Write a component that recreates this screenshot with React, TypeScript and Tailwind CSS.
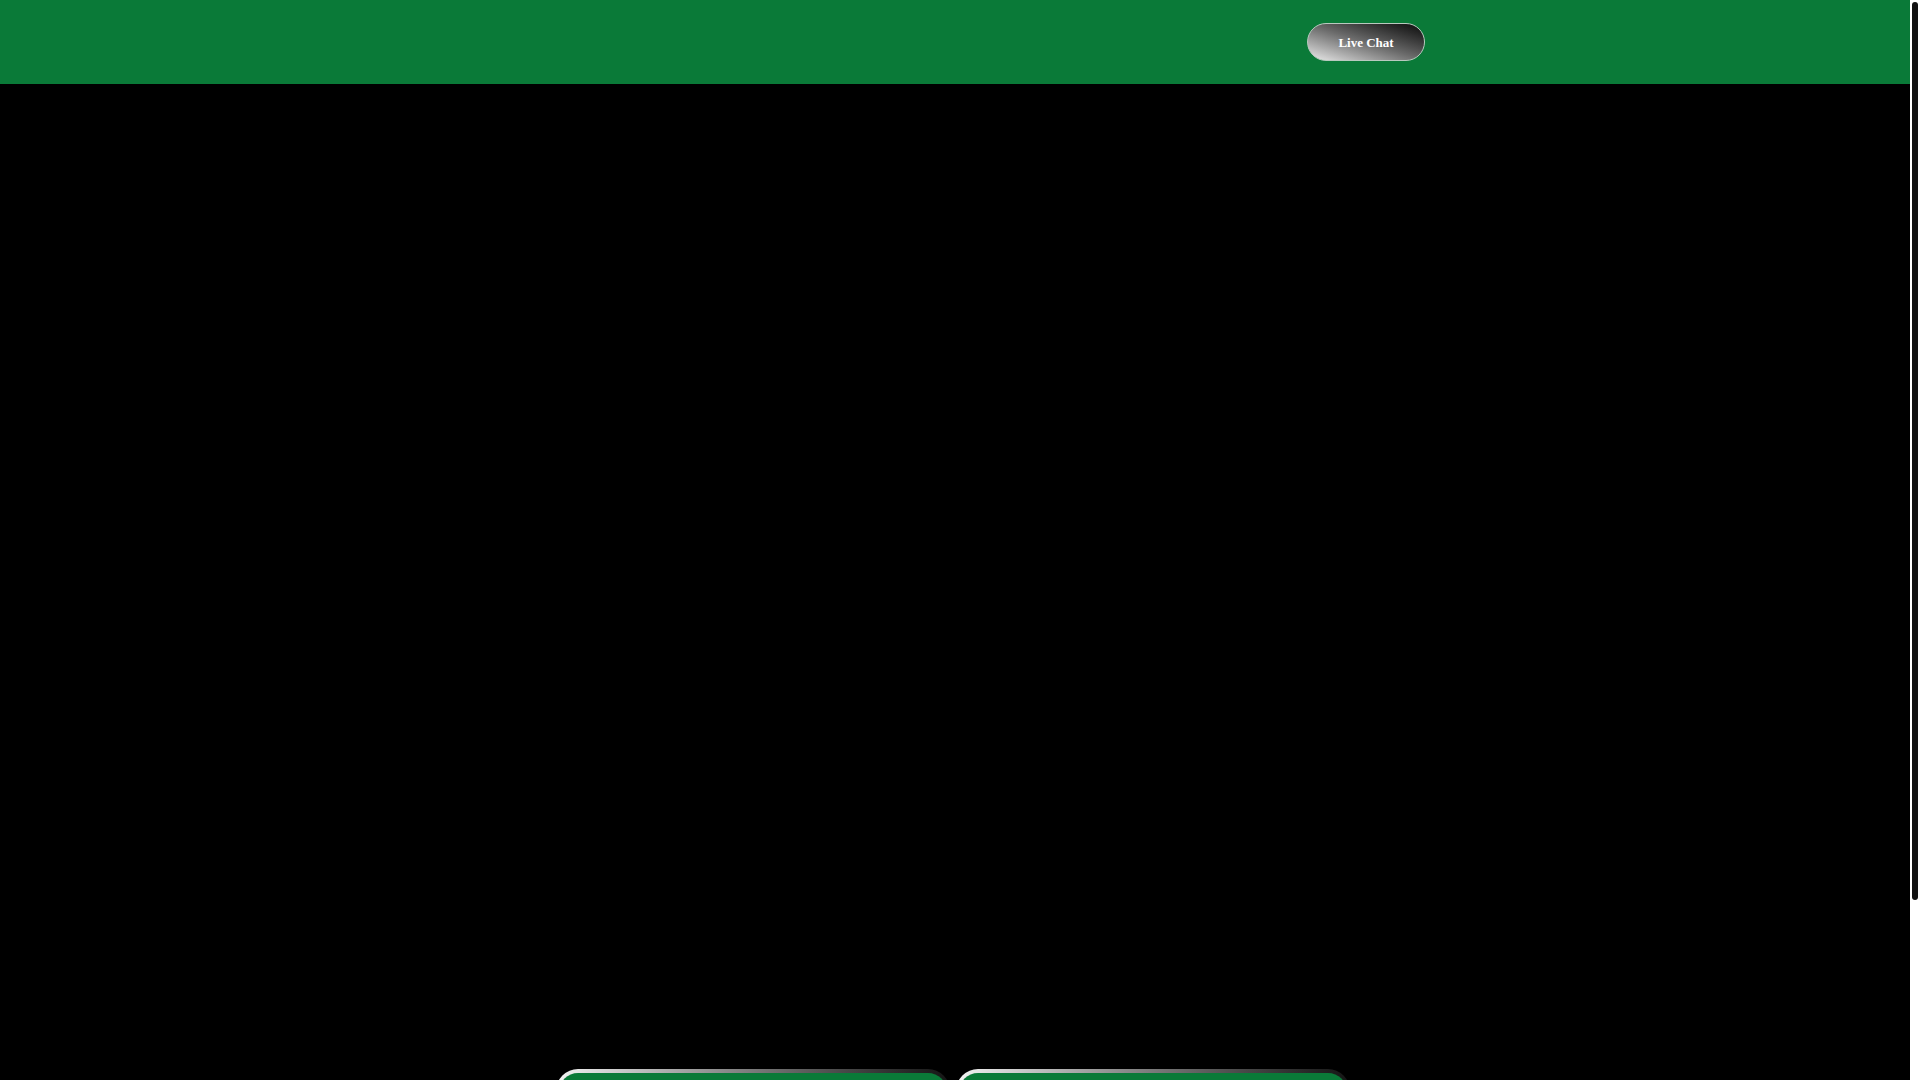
import React from "react";

export default function App() {
  return (
    <div
      className="min-h-screen w-full bg-white pr-[10px]"
      style={{ fontFamily: '"Liberation Serif", "Times New Roman", serif' }}
    >
      <header className="h-[84px] w-full bg-[#0a7a38] flex items-start">
        <div className="w-full flex justify-end pr-[485px] pt-[23px]">
          <button className="h-[38px] w-[118px] rounded-full border border-[#b9c9bf] bg-gradient-to-tr from-[#ececec] via-[#6a6a6a] to-[#0c0c0c] text-white font-bold text-[13px] leading-none flex items-center justify-center">
            Live Chat
          </button>
        </div>
      </header>
      <main className="w-full bg-black">
        <div className="h-[985px] w-full bg-black" />
        <div className="flex justify-center gap-[6px] pr-[4px]">
          <div className="w-[394px] rounded-[22px] bg-gradient-to-r from-[#f4f4f4] via-[#7a7a7a] to-[#151515] pt-[4px] px-[3px] pb-[3px]">
            <div className="h-[56px] rounded-[19px] bg-[#0a7a38]" />
          </div>
          <div className="w-[394px] rounded-[22px] bg-gradient-to-r from-[#f4f4f4] via-[#7a7a7a] to-[#151515] pt-[4px] px-[3px] pb-[3px]">
            <div className="h-[56px] rounded-[19px] bg-[#0a7a38]" />
          </div>
        </div>
        <div className="h-[168px] w-full bg-black" />
      </main>
      <div className="fixed top-0 right-0 h-screen w-[10px] bg-white">
        <div className="mx-[2px] mt-[2px] h-[898px] rounded-full bg-[#111111]" />
      </div>
    </div>
  );
}
